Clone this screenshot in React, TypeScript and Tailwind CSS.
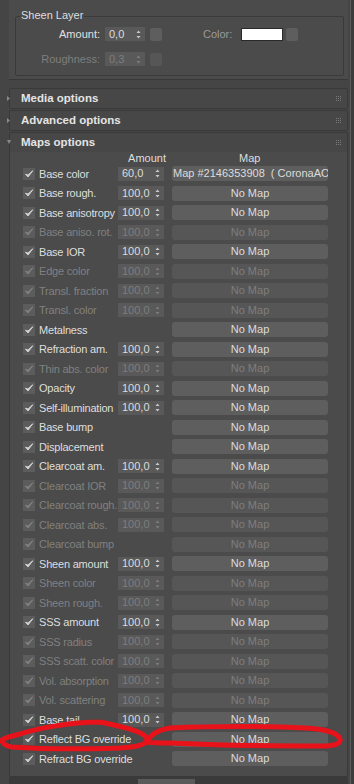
import React from "react";

type MapRow = {
  label: string;
  amount?: string;
  enabled: boolean;
  map?: string;
};

const rows: MapRow[] = [
  { label: "Base color", amount: "60,0", enabled: true, map: "Map #2146353908  ( CoronaAO )" },
  { label: "Base rough.", amount: "100,0", enabled: true },
  { label: "Base anisotropy", amount: "100,0", enabled: true },
  { label: "Base aniso. rot.", amount: "100,0", enabled: false },
  { label: "Base IOR", amount: "100,0", enabled: true },
  { label: "Edge color", amount: "100,0", enabled: false },
  { label: "Transl. fraction", amount: "100,0", enabled: false },
  { label: "Transl. color", amount: "100,0", enabled: false },
  { label: "Metalness", enabled: true },
  { label: "Refraction am.", amount: "100,0", enabled: true },
  { label: "Thin abs. color", amount: "100,0", enabled: false },
  { label: "Opacity", amount: "100,0", enabled: true },
  { label: "Self-illumination", amount: "100,0", enabled: true },
  { label: "Base bump", enabled: true },
  { label: "Displacement", enabled: true },
  { label: "Clearcoat am.", amount: "100,0", enabled: true },
  { label: "Clearcoat IOR", amount: "100,0", enabled: false },
  { label: "Clearcoat rough.", amount: "100,0", enabled: false },
  { label: "Clearcoat abs.", amount: "100,0", enabled: false },
  { label: "Clearcoat bump", enabled: false },
  { label: "Sheen amount", amount: "100,0", enabled: true },
  { label: "Sheen color", amount: "100,0", enabled: false },
  { label: "Sheen rough.", amount: "100,0", enabled: false },
  { label: "SSS amount", amount: "100,0", enabled: true },
  { label: "SSS radius", amount: "100,0", enabled: false },
  { label: "SSS scatt. color", amount: "100,0", enabled: false },
  { label: "Vol. absorption", amount: "100,0", enabled: false },
  { label: "Vol. scattering", amount: "100,0", enabled: false },
  { label: "Base tail", amount: "100,0", enabled: true },
  { label: "Reflect BG override", enabled: true },
  { label: "Refract BG override", enabled: true },
];

function SpinArrows({ dim }: { dim?: boolean }) {
  return (
    <svg width="5" height="9" viewBox="0 0 5 9" className="shrink-0">
      <path d="M2.5 0.5 L4.5 3 L0.5 3 Z M0.5 6 L4.5 6 L2.5 8.5 Z" fill={dim ? "#7c7c7c" : "#c8c8c8"} />
    </svg>
  );
}

function Spinner({ value, dim, width }: { value: string; dim?: boolean; width: string }) {
  return (
    <div
      className={`${width} h-[14px] flex items-center justify-between pl-[4px] pr-[4px] bg-[#595959] ${
        dim ? "text-[#7d7d7d]" : "text-[#dcdcdc]"
      }`}
    >
      <span className="leading-none">{value}</span>
      <SpinArrows dim={dim} />
    </div>
  );
}

function CheckBox({ dim }: { dim?: boolean }) {
  return (
    <div className="w-[12px] h-[12px] bg-[#5c5c5c] flex items-center justify-center shrink-0">
      <svg width="10" height="10" viewBox="0 0 10 10">
        <path
          d="M1.5 5.2 L4 8 L8.8 1.8 L4 6 Z"
          fill={dim ? "#808080" : "#d0d0d0"}
          stroke={dim ? "#808080" : "#d0d0d0"}
          strokeWidth="1"
          strokeLinejoin="round"
        />
      </svg>
    </div>
  );
}

function Grip() {
  return (
    <div className="grid grid-cols-3 gap-[1px] w-[5px]">
      {Array.from({ length: 9 }).map((_, i) => (
        <div key={i} className="w-[1px] h-[1px] bg-[#7a7a7a]" />
      ))}
    </div>
  );
}

function RolloutHeader({ title, open }: { title: string; open?: boolean }) {
  return (
    <div className="relative h-[19px] flex items-center justify-between pl-[11px] pr-[6px] bg-[#474747] rounded-t-[2px]">
      <svg width="4" height="5" viewBox="0 0 4 5" className="absolute left-[-3px] top-[7px]">
        {open ? <path d="M0 0 L4 0 L2 4 Z" fill="#8a8a8a" /> : <path d="M0 0 L3 2.5 L0 5 Z" fill="#8a8a8a" />}
      </svg>
      <span className="font-bold text-[11.5px] text-[#e4e4e4] leading-none">{title}</span>
      <Grip />
    </div>
  );
}

function MapsRow({ row }: { row: MapRow }) {
  const dim = !row.enabled;
  return (
    <div className="h-[19.5px] flex items-center pl-[13px]">
      <CheckBox dim={dim} />
      <div className="ml-[4px] w-[79px] shrink-0 relative h-[12px]">
        <span
          className={`absolute left-0 top-0 whitespace-nowrap leading-[12px] tracking-[-0.2px] ${
            dim ? "text-[#808080]" : "text-[#dedede]"
          }`}
        >
          {row.label}
        </span>
      </div>
      <div className="w-[46px] shrink-0">
        {row.amount && <Spinner value={row.amount} dim={dim} width="w-[46px]" />}
      </div>
      <div
        className={`ml-[8px] w-[156px] h-[15px] rounded-[3px] flex items-center overflow-hidden whitespace-pre leading-none ${
          row.map ? "justify-start pl-[1px]" : "justify-center"
        } ${dim ? "bg-[#565656] text-[#7e7e7e]" : "bg-[#5e5e5e] text-[#dcdcdc]"}`}
      >
        {row.map ?? "No Map"}
      </div>
    </div>
  );
}

export default function App() {
  return (
    <div
      className="relative w-[354px] h-[784px] overflow-hidden bg-[#454545] text-[11px] flex"
      style={{ fontFamily: '"Liberation Sans", Arial, sans-serif' }}
    >
      <div className="w-[350px] flex flex-col pl-[9px] pr-[2px]">
        {/* Sheen layer panel (tail of previous rollout) */}
        <div className="h-[80px] shrink-0 bg-[#4b4b4b] border-b border-[#383838] pt-[16px] pl-[6px] pr-[4px]">
          <div className="relative h-[60px] border border-[#3a3a3a] rounded-[2px]">
            <span className="absolute left-[4px] top-[-7px] px-[1px] bg-[#4b4b4b] text-[#dedede] leading-none">
              Sheen Layer
            </span>
            <div className="flex items-center mt-[10px] h-[14px]">
              <span className="w-[84px] text-right text-[#e0e0e0] leading-none">Amount:</span>
              <div className="ml-[5px]">
                <Spinner value="0,0" width="w-[40px]" />
              </div>
              <div className="ml-[5px] w-[12px] h-[13px] rounded-[2px] bg-[#5e5e5e]" />
              <span className="ml-[41px] text-[#9a9a9a] leading-none">Color:</span>
              <div className="ml-[9px] w-[42px] h-[13px] bg-white border border-[#2a2a2a]" />
              <div className="ml-[3px] w-[12px] h-[13px] rounded-[2px] bg-[#5e5e5e]" />
            </div>
            <div className="flex items-center mt-[11px] h-[14px]">
              <span className="w-[84px] text-right text-[#7e7e7e] leading-none">Roughness:</span>
              <div className="ml-[5px]">
                <Spinner value="0,3" dim width="w-[40px]" />
              </div>
              <div className="ml-[5px] w-[12px] h-[13px] rounded-[2px] bg-[#565656]" />
            </div>
          </div>
        </div>

        <div className="h-[8px] shrink-0" />
        <div className="border border-[#393939] rounded-[2px] shrink-0">
          <RolloutHeader title="Media options" />
        </div>
        <div className="h-[1px] shrink-0" />
        <div className="border border-[#393939] rounded-[2px] shrink-0">
          <RolloutHeader title="Advanced options" />
        </div>
        <div className="h-[1px] shrink-0" />
        <div className="border border-[#393939] rounded-[2px] bg-[#4b4b4b] flex flex-col h-[645px] shrink-0">
          <RolloutHeader title="Maps options" open />
          <div className="flex h-[12px] items-center text-[#dedede] leading-none">
            <span className="w-[156px] text-right">Amount</span>
            <span className="ml-[73px]">Map</span>
          </div>
          <div className="flex flex-col">
            {rows.map((r) => (
              <MapsRow key={r.label} row={r} />
            ))}
          </div>
        </div>
        <div className="flex-1 bg-[#3a3a3a] relative">
          <div className="absolute left-[129px] top-[2px] w-[57px] h-[10px] bg-[#5a5a5a]" />
        </div>
      </div>
      <div className="w-[1px] bg-[#5c5c5c]" />
      <div className="flex-1 bg-[#3c3c3c]" />

      {/* hand-drawn red annotation */}
      <svg className="absolute left-0 top-0 pointer-events-none" width="354" height="784" viewBox="0 0 354 784">
        <path
          d="M100 722 C 70 722, 35 729, 20 734 C 8 737, 1 739, 2 741 C 3 744, 6 746, 12 747 C 40 749, 90 749, 120 748 C 135 747, 146 745, 147 740 C 147 734, 135 730, 118 726 C 110 724, 105 723, 100 722"
          fill="none"
          stroke="#e8121b"
          strokeWidth="5"
          strokeLinecap="round"
        />
        <path
          d="M147 742 C 150 735, 158 730, 170 728 C 210 726, 270 726, 305 728 C 325 729, 338 733, 340 739 C 341 744, 334 746, 322 746 C 280 746, 210 745, 170 743 C 160 743, 152 743, 147 742"
          fill="none"
          stroke="#e8121b"
          strokeWidth="5"
          strokeLinecap="round"
        />
      </svg>
    </div>
  );
}
